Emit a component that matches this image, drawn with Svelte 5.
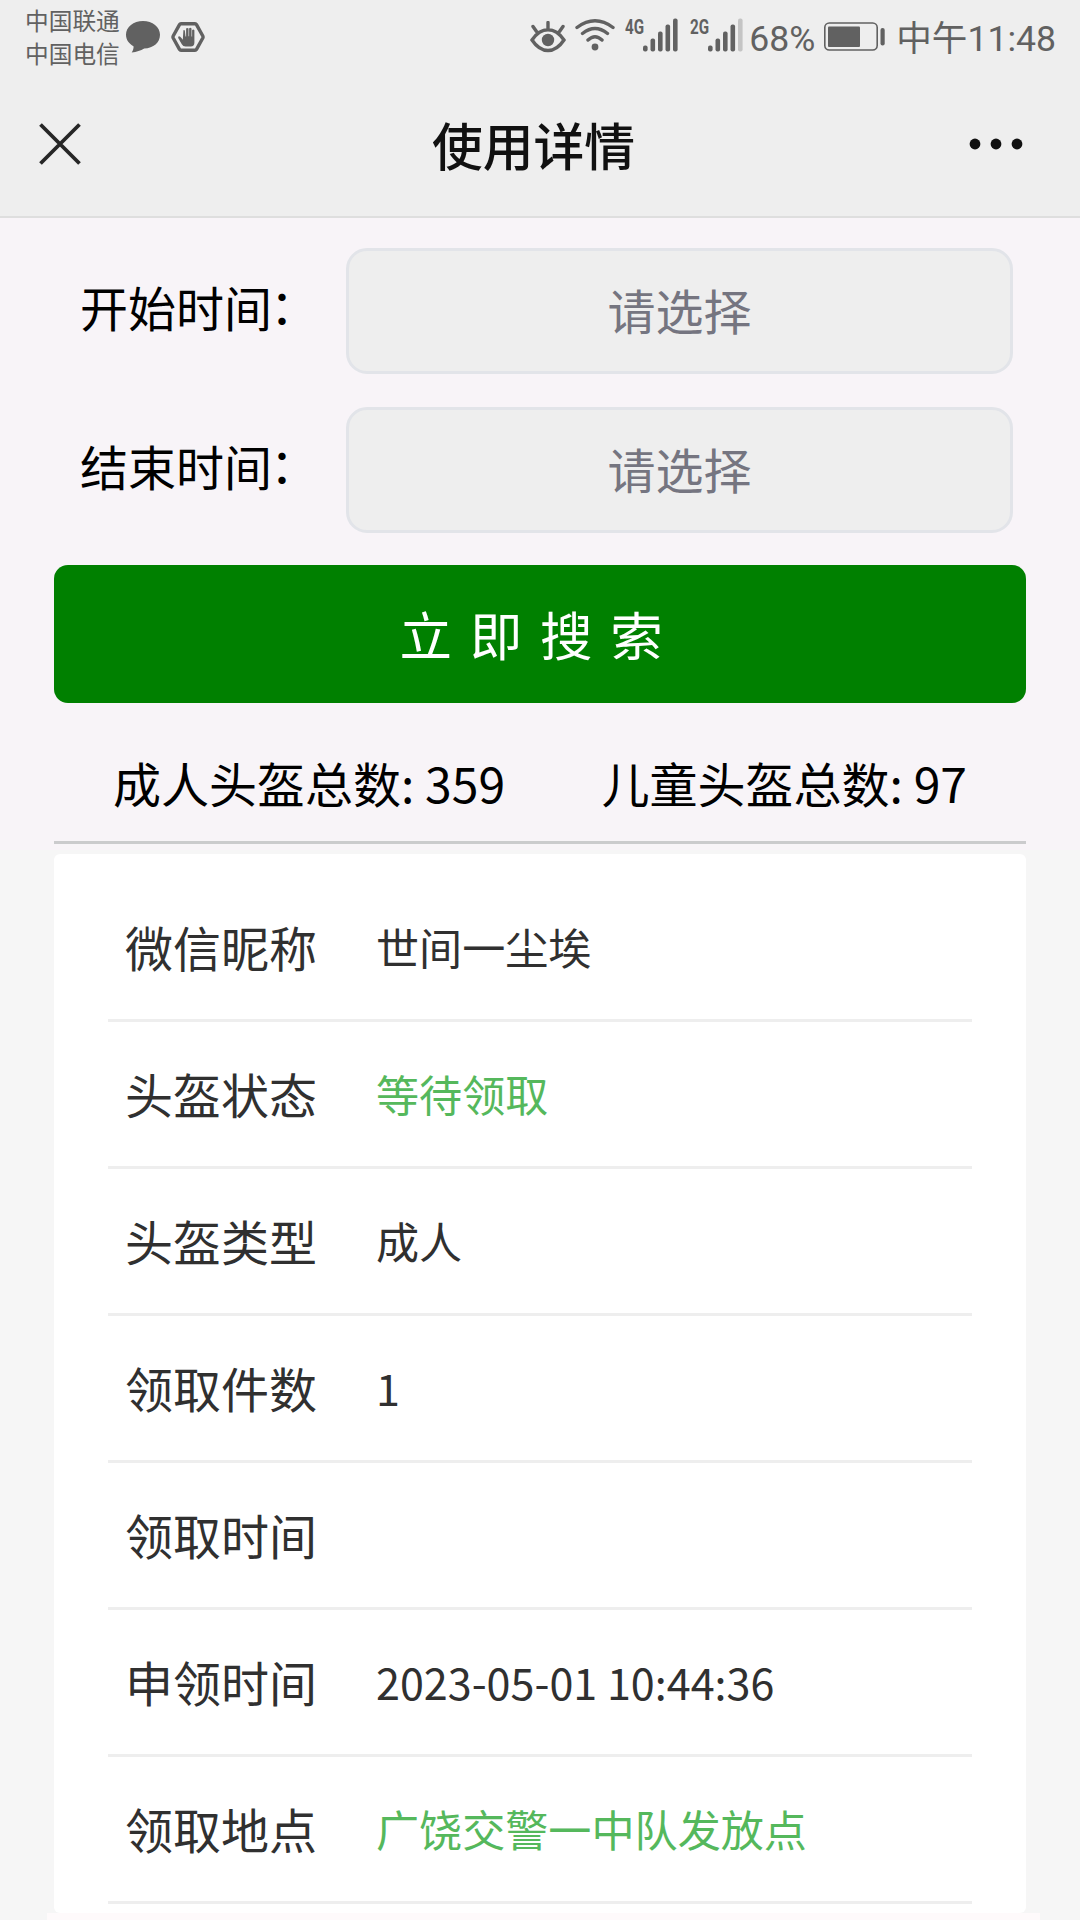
<script lang="ts">
  let inicio = "";
  let fin = "";

  const adultos = 359;
  const infantiles = 97;

  const filas = [
    { etiqueta: "微信昵称", valor: "世间一尘埃", verde: false },
    { etiqueta: "头盔状态", valor: "等待领取", verde: true },
    { etiqueta: "头盔类型", valor: "成人", verde: false },
    { etiqueta: "领取件数", valor: "1", verde: false },
    { etiqueta: "领取时间", valor: "", verde: false },
    { etiqueta: "申领时间", valor: "2023-05-01 10:44:36", verde: false },
    { etiqueta: "领取地点", valor: "广饶交警一中队发放点", verde: true },
  ];

  const redes = [
    { tipo: "4G", nivel: 5 },
    { tipo: "2G", nivel: 4 },
  ];
</script>

<div class="pantalla">
  <header>
    <div class="status-bar">
      <div class="operadores">
        <span>中国联通</span>
        <span>中国电信</span>
      </div>
      <svg class="burbuja" width="34" height="32" viewBox="0 0 34 32">
        <path
          d="M17 0C7.500 0 0 6 0 13.700c0 5 3 9 7.500 11.500.3 2-.4 4-1.800 6.300 5-.5 9-1.800 12.500-3.900C27.500 27 34 21.500 34 13.700 34 6 26.500 0 17 0z"
        />
      </svg>
      <svg class="mano" width="34" height="30" viewBox="0 0 34 30">
        <path
          class="trazo"
          d="M10 1.700h14q1 0 1.500.9l6.300 11.400q.5 1 0 2l-6.300 11.400q-.5.9-1.500.9H10q-1 0-1.500-.9L2.200 16q-.5-1 0-2L8.500 2.600q.5-.9 1.500-.9z"
        />
        <path
          d="M12.400 8.300q1.300-.6 1.500.8l.6 5.400h.6V6.600q1.200-1.400 2.400 0v7.600h.6V6.400q1.200-1.300 2.400 0v8h.6V8.200q1.200-1.200 2.300 0v12.300q0 4-3.600 4h-5.200q-2.600 0-3.800-2.300L7.200 16q-.5-1.500 1-1.700 1 0 2 1.500l1.600 2z"
        />
      </svg>

      <div class="derecha">
        <svg class="ojo" width="36" height="32" viewBox="0 0 36 32">
          <path
            class="trazo"
            d="M2 19Q9 8.800 18 8.800T34 19Q27 29.500 18 29.500T2 19zM18 1.500v6M3 5.500l3.500 5M33 5.500l-3.500 5"
          />
          <circle cx="18" cy="19" r="6.200" />
        </svg>
        <svg class="wifi" width="40" height="32" viewBox="0 0 40 32">
          <path
            class="trazo"
            d="M2 8.500q18-13.500 36 0M7.500 14.500q12.500-10 25 0M13 21q7-6.500 14 0"
          />
          <circle cx="20" cy="28" r="3.400" />
        </svg>
        {#each redes as red}
          <div class="red">
            <span>{red.tipo}</span>
            <svg width="36" height="34" viewBox="0 0 36 34">
              {#each [6, 13, 20, 27, 33] as alto, i}
                <rect
                  x={i * 7.5}
                  y={33.5 - alto}
                  width="4.6"
                  height={alto}
                  rx="2"
                  class:apagada={i >= red.nivel}
                />
              {/each}
            </svg>
          </div>
        {/each}
        <span class="porcentaje">68%</span>
        <svg class="bateria" width="62" height="30" viewBox="0 0 62 30">
          <rect class="borde" x="0.8" y="1" width="52.400" height="27" rx="4.500" />
          <rect x="4" y="4.500" width="32" height="20.500" rx="1" />
          <rect x="56.500" y="6" width="4.200" height="17.500" rx="2" />
        </svg>
        <span class="hora">中午11:48</span>
      </div>
    </div>

    <div class="nav-bar">
      <svg class="cerrar" width="42" height="42" viewBox="0 0 42 42">
        <path d="M1.500 1.500l39 39M40.500 1.500l-39 39" />
      </svg>
      <h1>使用详情</h1>
      <svg class="menu" width="54" height="12" viewBox="0 0 54 12">
        <circle cx="6" cy="6" r="5.400" />
        <circle cx="27" cy="6" r="5.400" />
        <circle cx="48" cy="6" r="5.400" />
      </svg>
    </div>
  </header>

  <section class="busqueda">
    <div class="campo">
      <label for="inicio">开始时间<span class="dos-puntos">：</span></label>
      <input id="inicio" placeholder="请选择" bind:value={inicio} readonly />
    </div>
    <div class="campo">
      <label for="fin">结束时间<span class="dos-puntos">：</span></label>
      <input id="fin" placeholder="请选择" bind:value={fin} readonly />
    </div>
    <button class="btn-buscar">立即搜索</button>
    <div class="totales">
      <span>成人头盔总数: {adultos}</span>
      <span>儿童头盔总数: {infantiles}</span>
    </div>
  </section>

  <section class="tarjeta">
    {#each filas as fila}
      <div class="fila">
        <span class="etiqueta">{fila.etiqueta}</span>
        <span class="valor" class:verde={fila.verde}>{fila.valor}</span>
      </div>
    {/each}
  </section>
  <div class="pie"></div>
</div>

<style>
  :global(body) {
    background: #f6f6f6;
  }

  .pantalla {
    width: 1080px;
    height: 1920px;
    overflow: hidden;
    background: #f6f6f6;
    font-family: "Noto Sans CJK SC", sans-serif;
    color: #000;
  }

  header {
    box-sizing: border-box;
    height: 218px;
    background: #eee;
    border-bottom: 2px solid #dedede;
  }

  .status-bar {
    display: flex;
    align-items: flex-start;
    height: 72px;
    padding: 0 24px 0 25px;
    box-sizing: border-box;
    color: #616161;
    fill: #616161;
  }

  .status-bar svg {
    flex: none;
  }

  .trazo {
    fill: none;
    stroke: #616161;
    stroke-width: 3.4;
    stroke-linecap: round;
  }

  .operadores {
    display: flex;
    flex-direction: column;
    width: 96px;
    padding-top: 4px;
    font-size: 23.7px;
    line-height: 33px;
    white-space: nowrap;
  }

  .burbuja {
    margin: 21px 0 0 5px;
  }

  .mano {
    margin: 22px 0 0 11px;
  }

  .derecha {
    display: flex;
    align-items: flex-start;
    margin-left: auto;
    font-family: Roboto, "Noto Sans CJK SC", sans-serif;
  }

  .ojo {
    margin: 21px 9px 0 0;
  }

  .wifi {
    margin: 19px 10px 0 0;
  }

  .red {
    display: flex;
    align-items: flex-start;
    width: 65px;
    padding-top: 18px;
  }

  .red:nth-of-type(2) {
    width: 59px;
  }

  .red span {
    width: 18px;
    font-size: 20px;
    font-weight: 700;
    line-height: 18px;
    transform: scaleX(0.76);
    transform-origin: left;
  }

  .apagada {
    fill: #c4c4c4;
  }

  .porcentaje,
  .hora {
    font-size: 35.6px;
    line-height: 42px;
    margin-top: 18px;
    white-space: nowrap;
  }

  .bateria {
    margin: 22px 10px 0 9px;
  }

  .borde {
    fill: none;
    stroke: #616161;
    stroke-width: 1.6;
  }

  .nav-bar {
    display: grid;
    grid-template-columns: 1fr auto 1fr;
    align-items: center;
    height: 144px;
    padding: 0 57px 0 39px;
  }

  .cerrar {
    stroke: #262626;
    stroke-width: 3.8;
  }

  .menu {
    justify-self: end;
    fill: #111;
  }

  h1 {
    margin: 0;
    padding-left: 5px;
    font-size: 50.8px;
    line-height: 72px;
    font-weight: 500;
    color: #111;
  }

  .busqueda {
    display: flex;
    flex-direction: column;
    box-sizing: border-box;
    height: 632px;
    padding: 30px 54px 0;
    background: #f8f4f8;
  }

  .campo {
    display: flex;
    align-items: center;
    justify-content: space-between;
    height: 126px;
    margin-bottom: 33px;
    padding: 0 13px 0 26px;
  }

  label {
    font-size: 48px;
    line-height: 60px;
    padding-bottom: 10px;
  }

  .dos-puntos {
    margin-left: -2px;
    line-height: 1;
    vertical-align: 3px;
  }

  input {
    box-sizing: border-box;
    width: 667px;
    height: 126px;
    padding: 0 0 5px;
    border: 3px solid #e2e4e9;
    border-radius: 21px;
    background: #eee;
    font-family: inherit;
    font-size: 48px;
    text-align: center;
    outline: none;
  }

  input::placeholder {
    color: #757580;
    opacity: 1;
  }

  .btn-buscar {
    height: 138px;
    margin-top: -1px;
    padding: 0 0 2px;
    border: none;
    border-radius: 14px;
    background: #008000;
    color: #fff;
    font-family: inherit;
    font-size: 52.5px;
    letter-spacing: 17.8px;
  }

  .totales {
    display: flex;
    justify-content: space-between;
    align-items: center;
    box-sizing: border-box;
    height: 141px;
    padding: 20px 59px 0;
    border-bottom: 3px solid #cbcbcd;
    font-size: 48px;
    line-height: 60px;
    white-space: nowrap;
  }

  .tarjeta {
    height: 1059px;
    margin: 4px 54px 0;
    padding: 21px 54px 0;
    box-sizing: border-box;
    border-radius: 6px;
    background: #fff;
  }

  .fila {
    display: flex;
    align-items: center;
    box-sizing: border-box;
    height: 147px;
    padding-left: 17px;
    border-bottom: 3px solid #eee;
    color: #303030;
    white-space: nowrap;
  }

  .etiqueta {
    width: 251px;
    padding-bottom: 3px;
    font-size: 48px;
  }

  .valor {
    padding-bottom: 3px;
    font-size: 43.1px;
  }

  .verde {
    color: #55b85c;
  }

  .pie {
    height: 7px;
    margin: 0 40px 0 47px;
    background: #fefafb;
  }
</style>
